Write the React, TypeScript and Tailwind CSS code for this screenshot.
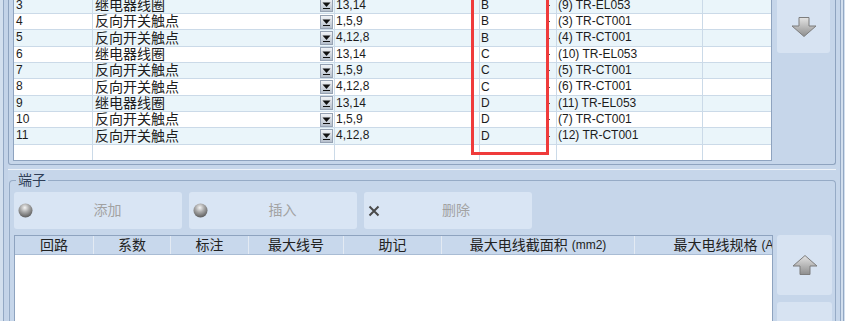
import React from 'react'

const rows = [
  { n: '3', name: '继电器线圈', pins: '13,14', grp: 'B', tag: '(9) TR-EL053' },
  { n: '4', name: '反向开关触点', pins: '1,5,9', grp: 'B', tag: '(3) TR-CT001' },
  { n: '5', name: '反向开关触点', pins: '4,12,8', grp: 'B', tag: '(4) TR-CT001' },
  { n: '6', name: '继电器线圈', pins: '13,14', grp: 'C', tag: '(10) TR-EL053' },
  { n: '7', name: '反向开关触点', pins: '1,5,9', grp: 'C', tag: '(5) TR-CT001' },
  { n: '8', name: '反向开关触点', pins: '4,12,8', grp: 'C', tag: '(6) TR-CT001' },
  { n: '9', name: '继电器线圈', pins: '13,14', grp: 'D', tag: '(11) TR-EL053' },
  { n: '10', name: '反向开关触点', pins: '1,5,9', grp: 'D', tag: '(7) TR-CT001' },
  { n: '11', name: '反向开关触点', pins: '4,12,8', grp: 'D', tag: '(12) TR-CT001' },
]

const headers = [
  { label: '回路', w: 'w-[79px]' },
  { label: '系数', w: 'w-[77px]' },
  { label: '标注', w: 'w-[78px]' },
  { label: '最大线号', w: 'w-[95px]' },
  { label: '助记', w: 'w-[98px]' },
  { label: '最大电线截面积', extra: '(mm2)', w: 'w-[193px]' },
  { label: '最大电线规格', extra: '(A)', w: 'w-[182px]' },
]

const DropButton = () => (
  <svg width="13" height="14" viewBox="0 0 13 14" className="shrink-0">
    <defs>
      <linearGradient id="dbg" x1="0" y1="0" x2="0" y2="1">
        <stop offset="0" stopColor="#f4f6f9" />
        <stop offset="1" stopColor="#b3bdca" />
      </linearGradient>
    </defs>
    <rect x="0.5" y="0.5" width="12" height="13" fill="url(#dbg)" stroke="#96a2b3" />
    <polygon points="2.5,4.5 10.5,4.5 6.5,9" fill="#111" />
    <rect x="3" y="10" width="7" height="1" fill="#111" />
  </svg>
)

const Arrow = ({ up }: { up?: boolean }) => (
  <svg width="26" height="20" viewBox="0 0 26 20" className={up ? 'rotate-180' : ''}>
    <defs>
      <linearGradient id={up ? 'aru' : 'ard'} x1="0" y1={up ? '1' : '0'} x2="0" y2={up ? '0' : '1'}>
        <stop offset="0" stopColor="#e4e4e4" />
        <stop offset="1" stopColor="#8e8e8e" />
      </linearGradient>
    </defs>
    <polygon
      points="8,0.5 18,0.5 18,9 25,9 13,19.5 1,9 8,9"
      fill={`url(#${up ? 'aru' : 'ard'})`}
      stroke="#7d7d7d"
      strokeLinejoin="round"
    />
  </svg>
)

const Bulb = () => (
  <svg width="15" height="15" viewBox="0 0 15 15" className="shrink-0">
    <defs>
      <radialGradient id="bulb" cx="0.45" cy="0.3" r="0.7">
        <stop offset="0" stopColor="#f4f4f4" />
        <stop offset="0.45" stopColor="#a9a9a9" />
        <stop offset="1" stopColor="#5c5c5c" />
      </radialGradient>
    </defs>
    <circle cx="7.5" cy="7.5" r="7" fill="url(#bulb)" />
  </svg>
)

const Cross = () => (
  <svg width="12" height="12" viewBox="0 0 12 12" className="shrink-0">
    <path d="M1.5 1.5 L10.5 10.5 M10.5 1.5 L1.5 10.5" stroke="#4a4a4a" strokeWidth="2" />
  </svg>
)

const ToolButton = ({ icon, label }: { icon: React.ReactNode; label: string }) => (
  <div className="flex h-[37px] w-[168px] items-center rounded-[3px] bg-[#d9e5f4] pl-[4px]">
    {icon}
    <span className="flex-1 text-center text-[14px] text-[#a2a2a2]">{label}</span>
  </div>
)

export default function App() {
  return (
    <div className="flex h-[321px] w-[845px] overflow-hidden bg-[#c6d6ea] font-['Liberation_Sans','Noto_Sans_CJK_SC',sans-serif] text-[#1c1c1c]">
      {/* left window edge */}
      <div className="flex w-[8px] shrink-0">
        <div className="w-[3px] bg-[#d2dfee]" />
        <div className="w-[1px] bg-[#93a8c4]" />
        <div className="w-[4px] bg-[#c3d3e8]" />
      </div>

      <div className="flex w-[828px] shrink-0 flex-col">
        {/* upper panel */}
        <div className="flex h-[165px] shrink-0 items-start rounded-b-[3px] border-x border-b border-[#8ea3bf] pl-[4px]">
          <div className="relative h-[161px] w-[759px] shrink-0 overflow-hidden border-x border-b border-[#8ea3bf] bg-white">
            <div className="mt-[-2.35px] flex flex-col">
              {rows.map((r, i) => (
                <div
                  key={r.n}
                  className={`flex h-[16.35px] border-b border-[#cbdae8] text-[12px] leading-[15px] ${i % 2 === 0 ? 'bg-[#eaf5fa]' : 'bg-white'}`}
                >
                  <div className="w-[79px] border-r border-[#cbdae8] pl-[2px]">{r.n}</div>
                  <div className="flex w-[242px] items-center border-r border-[#cbdae8] pl-[2px] pr-[1px]">
                    <span className="flex-1 text-[14px] leading-[15px]">{r.name}</span>
                    <DropButton />
                  </div>
                  <div className="w-[145px] border-r border-[#cbdae8] pl-[1px]">{r.pins}</div>
                  <div className="flex w-[77px] items-center justify-between border-r border-[#cbdae8] pl-[1px] pr-[6px]">
                    <span>{r.grp}</span>
                    <span className="h-[1px] w-[1px] bg-[#555]" />
                  </div>
                  <div className="w-[146px] border-r border-[#cbdae8] pl-[1px]">{r.tag}</div>
                  <div className="flex-1" />
                </div>
              ))}
              <div className="flex h-[20px]">
                <div className="w-[79px] border-r border-[#cbdae8]" />
                <div className="w-[242px] border-r border-[#cbdae8]" />
                <div className="w-[145px] border-r border-[#cbdae8]" />
                <div className="w-[77px] border-r border-[#cbdae8]" />
                <div className="w-[146px] border-r border-[#cbdae8]" />
              </div>
            </div>
            {/* red annotation */}
            <div className="absolute left-[457px] top-[-10px] h-[165px] w-[78px] border-[3px] border-[#ef3b3b]" />
          </div>
          <div className="ml-[5px] flex h-[53px] w-[53px] items-center justify-center rounded-b-[3px] bg-[#d7e3f2]">
            <Arrow />
          </div>
        </div>

        <div className="mt-[4px] h-[1px] shrink-0 bg-[#eef3f9]" />

        {/* terminals group */}
        <fieldset className="ml-[1px] min-h-0 flex-1 rounded-t-[4px] border border-b-0 border-[#96abc6] pl-[4px] pt-[2px]">
          <legend className="ml-[2px] px-[2px] text-[14px] leading-[20px] text-[#2f3e57]">端子</legend>
          <div className="flex gap-[7px]">
            <ToolButton icon={<Bulb />} label="添加" />
            <ToolButton icon={<Bulb />} label="插入" />
            <ToolButton icon={<Cross />} label="删除" />
          </div>
          <div className="mt-[6px] flex items-start">
            <div className="h-[100px] w-[759px] shrink-0 overflow-hidden border border-[#8ea3bf] bg-white">
              <div className="flex h-[19px] border-b border-[#a9bcd4] bg-[#c8d8ec] whitespace-nowrap">
                {headers.map((h) => (
                  <div
                    key={h.label}
                    className={`${h.w} flex shrink-0 items-center justify-center border-r border-[#e3eaf3] text-[14px] leading-[18px] text-[#222]`}
                  >
                    {h.label}
                    {h.extra && <span className="ml-[4px] text-[12px]">{h.extra}</span>}
                  </div>
                ))}
              </div>
            </div>
            <div className="ml-[4px] flex w-[55px] flex-col gap-[7px]">
              <div className="flex h-[60px] items-center justify-center rounded-[3px] bg-[#d7e3f2]">
                <Arrow up />
              </div>
              <div className="h-[60px] rounded-[3px] bg-[#d7e3f2]" />
            </div>
          </div>
        </fieldset>
      </div>

      {/* right window edge */}
      <div className="flex w-[9px] shrink-0">
        <div className="w-[4px]" />
        <div className="w-[1px] bg-[#93a8c4]" />
        <div className="w-[2px] bg-[#d2dfee]" />
        <div className="w-[1px] bg-[#93a8c4]" />
        <div className="w-[1px] bg-[#d2dfee]" />
      </div>
    </div>
  )
}
